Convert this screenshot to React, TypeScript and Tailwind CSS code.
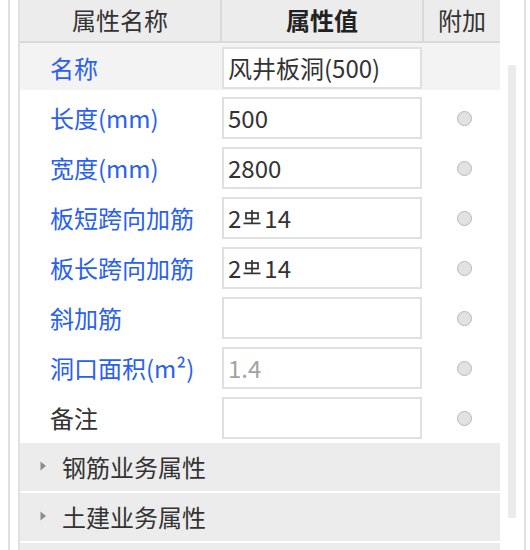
import React from "react";

type Row = { label: string; value: React.ReactNode; blue: boolean; radio: boolean; disabled?: boolean; highlight?: boolean };

function Steel() {
  return (
    <svg width="18" height="15" viewBox="0 0 18 15" className="shrink-0 w-[18px] h-[15px] ml-[2px] mr-[3px] mb-[2px]" fill="none" stroke="#333" strokeWidth="1.7">
      <rect x="3" y="3" width="12" height="5.6" />
      <line x1="9" y1="0" x2="9" y2="13.4" />
      <line x1="0.5" y1="13.4" x2="17.5" y2="13.4" />
    </svg>
  );
}

const steelValue = (
  <span className="inline-flex items-center">
    2<Steel />14
  </span>
);

const rows: Row[] = [
  { label: "名称", value: "风井板洞(500)", blue: true, radio: false, highlight: true },
  { label: "长度(mm)", value: "500", blue: true, radio: true },
  { label: "宽度(mm)", value: "2800", blue: true, radio: true },
  { label: "板短跨向加筋", value: steelValue, blue: true, radio: true },
  { label: "板长跨向加筋", value: steelValue, blue: true, radio: true },
  { label: "斜加筋", value: "", blue: true, radio: true },
  { label: "洞口面积(m²)", value: "1.4", blue: true, radio: true, disabled: true },
  { label: "备注", value: "", blue: false, radio: true },
];

const groups = ["钢筋业务属性", "土建业务属性", ""];

export default function App() {
  return (
    <div className="w-[530px] h-[550px] bg-white flex overflow-hidden text-[24px] leading-none text-[#333] font-['Microsoft_YaHei','Noto_Sans_CJK_SC',sans-serif]">
      <div className="ml-[8px] w-[2px] bg-[#e0e0e0]" />
      <div className="ml-[8px] w-[2px] bg-[#e0e0e0]" />
      <div className="w-[480px] flex flex-col">
        <div className="flex h-[43px] bg-[#ececec] border-b-2 border-[#d9d9d9] shrink-0">
          <div className="w-[200px] flex items-center justify-center pb-[2px]">属性名称</div>
          <div className="w-[2px] bg-[#d9d9d9]" />
          <div className="w-[200px] flex items-center justify-center pb-[2px] font-bold text-[#222]">属性值</div>
          <div className="w-[2px] bg-[#d9d9d9]" />
          <div className="flex-1 flex items-center justify-center pb-[2px]">附加</div>
        </div>
        {rows.map((r, i) => (
          <div
            key={i}
            className={`flex items-start h-[50px] pt-[4px] shrink-0 ${r.highlight ? "bg-[#f3f3f3] border-b-[3px] border-white" : "bg-white"}`}
          >
            <div className={`w-[202px] h-[42px] flex items-center pl-[30px] ${r.blue ? "text-[#2a60f2]" : "text-[#333]"}`}>
              {r.label}
            </div>
            <div
              className={`w-[200px] h-[42px] border-2 border-[#e0e0e0] bg-white flex items-center px-[4px] ${r.disabled ? "text-[#a3a3a3]" : "text-[#333]"}`}
            >
              {r.value}
            </div>
            <div className="w-[2px]" />
            <div className="flex-1 h-[42px] flex items-center">
              {r.radio && <div className="ml-[33px] w-[15px] h-[15px] rounded-full bg-[#e2e2e2] border border-[#b8b8b8]" />}
            </div>
          </div>
        ))}
        {groups.map((g, i) => (
          <div key={i} className="h-[48px] mb-[2px] bg-[#ececec] flex items-center shrink-0">
            <svg width="7" height="10" viewBox="0 0 7 10" className="ml-[20px] mt-[-2px]">
              <path d="M0.5 0.5 L6 5 L0.5 9.5 Z" fill="#8c8c8c" />
            </svg>
            <span className="ml-[15px]">{g}</span>
          </div>
        ))}
      </div>
      <div className="ml-[8px] w-[8px] pt-[65px]">
        <div className="h-[453px] bg-[#ebebeb] rounded-t-[2px]" />
      </div>
      <div className="ml-[8px] w-[2px] bg-[#e0e0e0]" />
    </div>
  );
}
